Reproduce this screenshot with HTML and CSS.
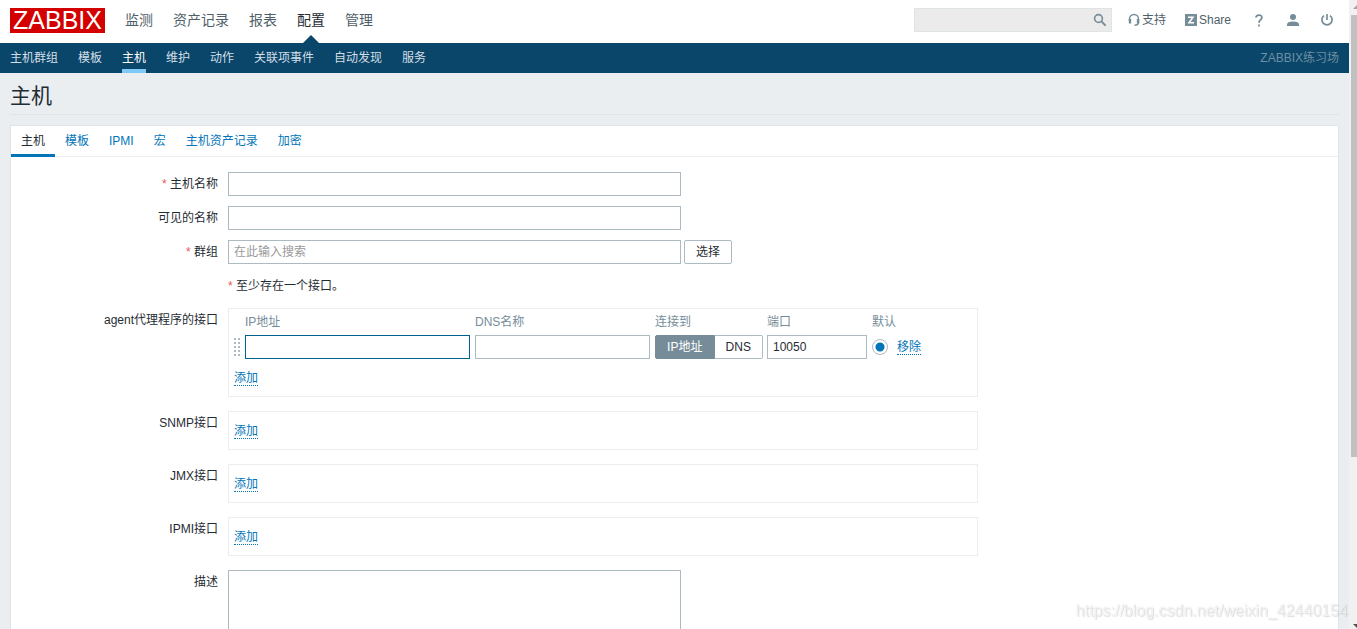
FILE: index.html
```html
<!DOCTYPE html>
<html lang="zh-CN">
<head>
<meta charset="utf-8">
<title>主机</title>
<link rel="stylesheet" href="styles.css">
</head>
<body>
<div class="page">
  <header class="topbar">
    <a class="logo" href="#">ZABBIX</a>
    <nav class="main-nav">
      <a href="#">监测</a>
      <a href="#">资产记录</a>
      <a href="#">报表</a>
      <a href="#" class="selected">配置</a>
      <a href="#">管理</a>
    </nav>
    <form class="search">
      <input type="text" aria-label="搜索">
      <button type="button" aria-label="搜索">
        <svg width="14" height="14" viewBox="0 0 14 14" fill="none" stroke="#768d99"><circle cx="5.5" cy="5.5" r="3.9" stroke-width="1.6"/><path d="M8.4 8.400l4.200 4.200" stroke-width="2"/></svg>
      </button>
    </form>
    <a class="tool support" href="#">
      <svg width="12" height="14" viewBox="0 0 12 14" fill="none" stroke="#768d99"><path d="M1.500 8V6a4.300 4.300 0 0 1 9 0V9.500q0 2.500-4 2.700" stroke-width="1.500"/><path d="M2 6v4.500M10 6v4.500" stroke-width="2.400"/></svg>
      <span>支持</span>
    </a>
    <a class="tool share" href="#">
      <svg width="12" height="12" viewBox="0 0 12 12"><path fill="#768d99" d="M0 0h12v12H0z"/><path d="M3 3.300h5L4 8.700h5" fill="none" stroke="#fff" stroke-width="1.500"/></svg>
      <span>Share</span>
    </a>
    <a class="tool help" href="#" aria-label="帮助">
      <svg width="8" height="13" viewBox="0 0 8 13" fill="none" stroke="#768d99" stroke-width="1.8"><path d="M1 3.600C1 .2 6.900.2 6.900 3.500 6.900 5.700 4 5.800 4 8.800"/><path d="M4 10.400v2"/></svg>
    </a>
    <a class="tool user" href="#" aria-label="用户">
      <svg width="12" height="12" viewBox="0 0 12 12" fill="#768d99"><circle cx="6" cy="3" r="3"/><path d="M0 12v-1.500Q0 7.500 6 7.500t6 3V12z"/></svg>
    </a>
    <a class="tool power" href="#" aria-label="退出">
      <svg width="12" height="12" viewBox="0 0 12 12" fill="none" stroke="#768d99" stroke-width="1.7"><path d="M3 1.600a5.100 5.100 0 1 0 6 0M6 0v6"/></svg>
    </a>
  </header>
  <nav class="sub-nav">
    <a href="#">主机群组</a>
    <a href="#">模板</a>
    <a href="#" class="selected">主机</a>
    <a href="#">维护</a>
    <a href="#">动作</a>
    <a href="#">关联项事件</a>
    <a href="#">自动发现</a>
    <a href="#">服务</a>
    <span class="server-name">ZABBIX练习场</span>
  </nav>
  <main class="content">
    <h1>主机</h1>
    <section class="panel">
      <nav class="tabs">
        <a href="#" class="selected">主机</a>
        <a href="#">模板</a>
        <a href="#">IPMI</a>
        <a href="#">宏</a>
        <a href="#">主机资产记录</a>
        <a href="#">加密</a>
      </nav>
      <form class="host-form">
        <label class="required" for="host">主机名称</label>
        <div><input class="wide" type="text" id="host"></div>
        <label for="visible">可见的名称</label>
        <div><input class="wide" type="text" id="visible"></div>
        <label class="required" for="groups">群组</label>
        <div class="group-row"><input class="wide" type="text" id="groups" placeholder="在此输入搜索"><button type="button">选择</button></div>
        <p class="note required">至少存在一个接口。</p>

        <span class="label">agent代理程序的接口</span>
        <div class="box">
          <table>
            <thead>
              <tr><th class="col-drag"></th><th class="col-ip">IP地址</th><th class="col-dns">DNS名称</th><th class="col-connect">连接到</th><th class="col-port">端口</th><th class="col-default">默认</th><th></th></tr>
            </thead>
            <tbody>
              <tr>
                <td><svg class="drag" width="6" height="18" viewBox="0 0 6 18"><path stroke="#acbbc2" stroke-width="2" stroke-dasharray="2 2" d="M1 0v18M5 0v18"/></svg></td>
                <td><input class="current" type="text" aria-label="IP地址"></td>
                <td><input type="text" aria-label="DNS名称"></td>
                <td>
                  <div class="segmented">
                    <input type="radio" name="useip" id="useip-ip" checked><label for="useip-ip">IP地址</label>
                    <input type="radio" name="useip" id="useip-dns"><label for="useip-dns">DNS</label>
                  </div>
                </td>
                <td><input type="text" value="10050" aria-label="端口"></td>
                <td><input class="default-radio" type="radio" name="default" checked aria-label="默认"></td>
                <td><button type="button" class="link">移除</button></td>
              </tr>
            </tbody>
          </table>
          <button type="button" class="link">添加</button>
        </div>
        <span class="label">SNMP接口</span>
        <div class="box"><button type="button" class="link">添加</button></div>
        <span class="label">JMX接口</span>
        <div class="box"><button type="button" class="link">添加</button></div>
        <span class="label">IPMI接口</span>
        <div class="box"><button type="button" class="link">添加</button></div>
        <label for="description">描述</label>
        <div><textarea class="wide" id="description" rows="7"></textarea></div>
      </form>
    </section>
  </main>
</div>
<div class="scrollbar" aria-hidden="true">
  <svg class="arrow" width="4" height="4" viewBox="0 0 4 4"><path fill="#a3a3a3" d="M0 4l4-4v4z"/></svg>
  <div class="thumb"></div>
  <svg class="arrow" width="4" height="4" viewBox="0 0 4 4"><path fill="#505050" d="M0 0h4v4z"/></svg>
</div>
<div class="watermark">https://blog.csdn.net/weixin_42440154</div>
</body>
</html>
```
FILE: styles.css
```css
* { box-sizing: border-box; }
body {
  margin: 0;
  height: 100vh;
  display: flex;
  overflow: hidden;
  background: #ebeef0;
  color: #1f2c33;
  font: 12px/24px "Liberation Sans", "Noto Sans CJK SC", sans-serif;
}
a { text-decoration: none; color: #0275b8; }
input, button, textarea { font: inherit; color: inherit; border-radius: 0; }
svg { display: block; flex: none; }

.page { flex: 1; min-width: 0; }

.topbar {
  display: flex;
  align-items: center;
  height: 43px;
  padding: 0 16px 3px 10px;
  background: #fff;
}
.logo {
  width: 95px;
  height: 25px;
  margin-top: 1px;
  background: #d40000;
  color: #fff;
  text-align: center;
  font: 25px/25px "Liberation Sans", sans-serif;
}
.main-nav { display: flex; margin: 0 auto 0 10px; font-size: 14px; }
.main-nav a { position: relative; padding: 0 10px; color: #4f5f69; }
.main-nav .selected { color: #1f2c33; }
.main-nav .selected::after {
  content: "";
  position: absolute;
  left: 50%;
  bottom: -11px;
  margin-left: -8px;
  border: 8px solid transparent;
  border-top: 0;
  border-bottom-color: #0a466a;
}
.search {
  display: flex;
  align-items: center;
  width: 198px;
  height: 24px;
  border: 1px solid #dfe4e7;
  background: #ebebeb;
}
.search input { flex: 1; min-width: 0; height: 22px; border: 0; background: none; outline: 0; }
.search button { padding: 0 4px; border: 0; background: none; }
.tool { display: flex; align-items: center; gap: 2px; color: #4f5f69; }
.support { margin-left: 16px; }
.share { margin-left: 19px; }
.help { margin-left: 24px; }
.user { margin-left: 24px; }
.power { margin-left: 22px; }

.sub-nav {
  display: flex;
  gap: 20px;
  height: 30px;
  padding: 0 10px;
  background: #0a466a;
  line-height: 30px;
}
.sub-nav a { color: #d3dfe6; }
.sub-nav .selected { color: #fff; border-bottom: 4px solid #80c8f5; }
.server-name { margin-left: auto; color: #6d8fa3; }

.content { padding: 0 10px; }
h1 {
  margin: 0 0 10px;
  padding: 7px 0 2px;
  border-bottom: 1px solid #dfe4e7;
  font-size: 21px;
  font-weight: 400;
  line-height: 32px;
}
.panel { border: 1px solid #dfe4e7; background: #fff; }
.tabs { display: flex; height: 31px; border-bottom: 1px solid #ebeef0; line-height: 30px; }
.tabs a { height: 31px; padding: 0 10px; }
.tabs .selected { color: #1f2c33; border-bottom: 3px solid #0275b8; }

.host-form {
  display: grid;
  grid-template-columns: 207px minmax(0, 1fr);
  column-gap: 10px;
  row-gap: 10px;
  padding: 15px 0;
}
.host-form > label, .label { text-align: right; }
.required::before { content: "* "; color: #e45959; }
.note { grid-column: 2; margin: 0; }
.host-form input[type="text"], textarea {
  display: block;
  width: 100%;
  height: 24px;
  padding: 0 5px;
  border: 1px solid #acbbc2;
  background: #fff;
  outline: 0;
}
.host-form input.wide[type="text"], textarea.wide { width: 453px; }
.host-form textarea { height: 120px; resize: none; }
input::placeholder { color: #999; opacity: 1; }
.group-row { display: flex; gap: 3px; }
.group-row button {
  flex: none;
  height: 24px;
  padding: 0 11px;
  border: 1px solid #acbbc2;
  border-radius: 2px;
  background: #fff;
  line-height: 22px;
}

.box {
  width: 750px;
  margin-bottom: 4px;
  padding: 11px 5px 10px;
  border: 1px solid #ebeef0;
  line-height: 16px;
}
.box:has(table) { padding-top: 1px; }
.link {
  display: block;
  height: 16px;
  padding: 0;
  border: 0;
  border-bottom: 1px dotted #0275b8;
  background: none;
  color: #0275b8;
  line-height: 16px;
}
table { margin-bottom: 11px; border-collapse: collapse; table-layout: fixed; width: 100%; }
th { height: 25px; padding: 0 0 1px; color: #768d99; font-weight: 400; text-align: left; }
td { height: 24px; padding: 0 5px 0 0; }
.col-drag { width: 11px; }
.col-ip { width: 230px; }
.col-dns { width: 180px; }
.col-connect { width: 112px; }
.col-port { width: 105px; }
.col-default { width: 25px; }
.host-form input.current[type="text"] { border-color: #03618f; }
.segmented { display: flex; width: 108px; }
.segmented input { position: absolute; opacity: 0; }
.segmented label {
  flex: 1 1 auto;
  height: 24px;
  border: 1px solid #acbbc2;
  border-left: 0;
  border-radius: 0 2px 2px 0;
  line-height: 22px;
  text-align: center;
}
.segmented label:first-of-type { border-left: 1px solid #acbbc2; border-radius: 2px 0 0 2px; }
.segmented input:checked + label { background: #768d99; border-color: #768d99; color: #fff; }
.default-radio {
  display: block;
  appearance: none;
  width: 16px;
  height: 16px;
  margin: 0;
  border: 1px solid #acbbc2;
  border-radius: 50%;
  background: #fff;
}
.default-radio:checked { background: radial-gradient(circle, #0275b8 4px, #fff 5px); }

.scrollbar {
  display: flex;
  flex-direction: column;
  width: 8px;
  padding: 5px 0 1px 2px;
  background: #f1f1f1;
}
.arrow { margin-left: auto; }
.thumb { flex: none; height: 71%; margin: 6px 0 auto; background: #c1c1c1; }

.watermark {
  position: fixed;
  right: 9px;
  bottom: 6px;
  color: rgba(255, 255, 255, 0.7);
  font-size: 16px;
  text-shadow: 0 0 1px rgba(0, 0, 0, 0.16), 1px 1px 1px rgba(0, 0, 0, 0.12);
  pointer-events: none;
}
```
